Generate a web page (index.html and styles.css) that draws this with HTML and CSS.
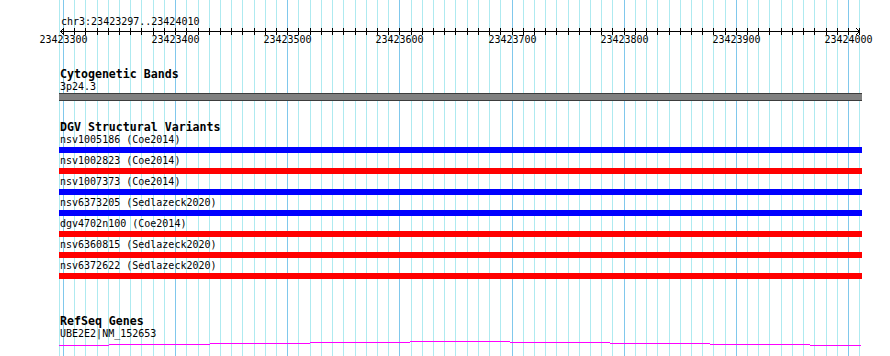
FILE: index.html
```html
<!DOCTYPE html>
<html>
<head>
    <title>chr3:23423297..23424010</title>
    <link rel="stylesheet" href="styles.css">
</head>
<body>
<div class="view">
    <svg class="grid" id="grid" width="890" height="356"></svg>

    <svg class="ruler" id="ruler" width="890" height="50">
        <text class="ruler-loc" x="61" y="25">chr3:23423297..23424010</text>
        <line class="axis" x1="60" y1="31.5" x2="860" y2="31.5"/>
        <polyline class="axis" points="64,28 60.5,31.5 64,35"/>
        <polyline class="axis" points="856,28 859.5,31.5 856,35"/>
    </svg>

    <div class="track track-bands">
        <div class="track-title">Cytogenetic Bands</div>
        <div class="band-label">3p24.3</div>
        <div class="band"></div>
    </div>

    <div class="track track-dgv">
        <div class="track-title">DGV Structural Variants</div>
        <div class="feature-label">nsv1005186 (Coe2014)</div>
        <div class="bar bar-gain"></div>
        <div class="feature-label">nsv1002823 (Coe2014)</div>
        <div class="bar bar-loss"></div>
        <div class="feature-label">nsv1007373 (Coe2014)</div>
        <div class="bar bar-gain"></div>
        <div class="feature-label">nsv6373205 (Sedlazeck2020)</div>
        <div class="bar bar-gain"></div>
        <div class="feature-label">dgv4702n100 (Coe2014)</div>
        <div class="bar bar-loss"></div>
        <div class="feature-label">nsv6360815 (Sedlazeck2020)</div>
        <div class="bar bar-loss"></div>
        <div class="feature-label">nsv6372622 (Sedlazeck2020)</div>
        <div class="bar bar-loss"></div>
    </div>

    <div class="track track-genes">
        <div class="track-title">RefSeq Genes</div>
        <div class="band-label">UBE2E2|NM_152653</div>
        <svg class="gene" width="803" height="6">
            <rect x="0" y="5" width="50" height="1"/>
            <rect x="50" y="4" width="101" height="1"/>
            <rect x="151" y="3" width="100" height="1"/>
            <rect x="251" y="2" width="100" height="1"/>
            <rect x="351" y="1" width="100" height="1"/>
            <rect x="451" y="2" width="100" height="1"/>
            <rect x="551" y="3" width="100" height="1"/>
            <rect x="651" y="4" width="100" height="1"/>
            <rect x="751" y="5" width="51" height="1"/>
        </svg>
    </div>
</div>
<script src="ruler.js"></script>
</body>
</html>
```

FILE: styles.css
```css
body {
    margin: 0;
    background: #fff;
    color: #000;
    font-family: "DejaVu Sans Mono", "Liberation Mono", monospace;
}

.view {
    position: relative;
    width: 890px;
    height: 356px;
    overflow: hidden;
}

.grid {
    position: absolute;
    top: 0;
    left: 0;
    shape-rendering: crispEdges;
}

.grid .minor {
    stroke: #aeeaf0;
}

.grid .major {
    stroke: #80c8ec;
}

.ruler {
    display: block;
    position: relative;
    shape-rendering: crispEdges;
}

.ruler text {
    font-family: "DejaVu Sans Mono", monospace;
    font-size: 10px;
    fill: #000;
}

.ruler .axis,
.ruler .tick {
    stroke: #000;
    stroke-width: 1;
    fill: none;
}

.track {
    position: relative;
    width: 803px;
    padding-left: 59px;
}

.track-title {
    height: 8px;
    padding-left: 1px;
    font-weight: bold;
    font-size: 11.6px;
    line-height: 6px;
    white-space: nowrap;
}

.band-label {
    height: 10px;
    margin-top: 3px;
    padding-left: 1px;
    font-size: 10px;
    line-height: 9px;
    white-space: nowrap;
}

.feature-label {
    height: 12px;
    padding: 2px 0 1px 1px;
    font-size: 10px;
    line-height: 12px;
    white-space: nowrap;
}

.track-bands {
    margin-top: 21px;
}

.band {
    height: 8px;
    margin-top: 1px;
    box-sizing: border-box;
    background: #808080;
    border-top: 1px solid #3c3c3c;
    border-bottom: 1px solid #3c3c3c;
}

.track-dgv {
    margin-top: 23px;
}

.bar {
    height: 6px;
}

.bar-gain {
    background: #0000ff;
}

.bar-loss {
    background: #ff0000;
}

.track-genes {
    margin-top: 39px;
}

.gene {
    display: block;
    margin-top: 1px;
}

.gene rect {
    fill: #ff00ff;
}
```

FILE: ruler.js
```js
// grid lines and ruler ticks, one every 10bp starting at 23423300
var NS = "http://www.w3.org/2000/svg";
var grid = document.getElementById("grid");
var ruler = document.getElementById("ruler");
var startX = 63;
var step = 11.214;

function add(parent, tag, attrs, text) {
    var el = document.createElementNS(NS, tag);
    for (var k in attrs) el.setAttribute(k, attrs[k]);
    if (text) el.textContent = text;
    parent.appendChild(el);
    return el;
}

// left edge of the region
add(grid, "line", { x1: 59.5, y1: 0, x2: 59.5, y2: 356, "class": "minor" });

for (var i = 0; i <= 71; i++) {
    var x = Math.round(startX + i * step) + 0.5;
    var major = i % 10 === 0;
    add(grid, "line", { x1: x, y1: 0, x2: x, y2: 356, "class": major ? "major" : "minor" });
    add(ruler, "line", { x1: x, y1: 28, x2: x, y2: 35, "class": "tick" });
    if (major) {
        add(ruler, "text", { x: x, y: 43, "text-anchor": "middle" }, String(23423300 + i * 10));
    }
}
```
